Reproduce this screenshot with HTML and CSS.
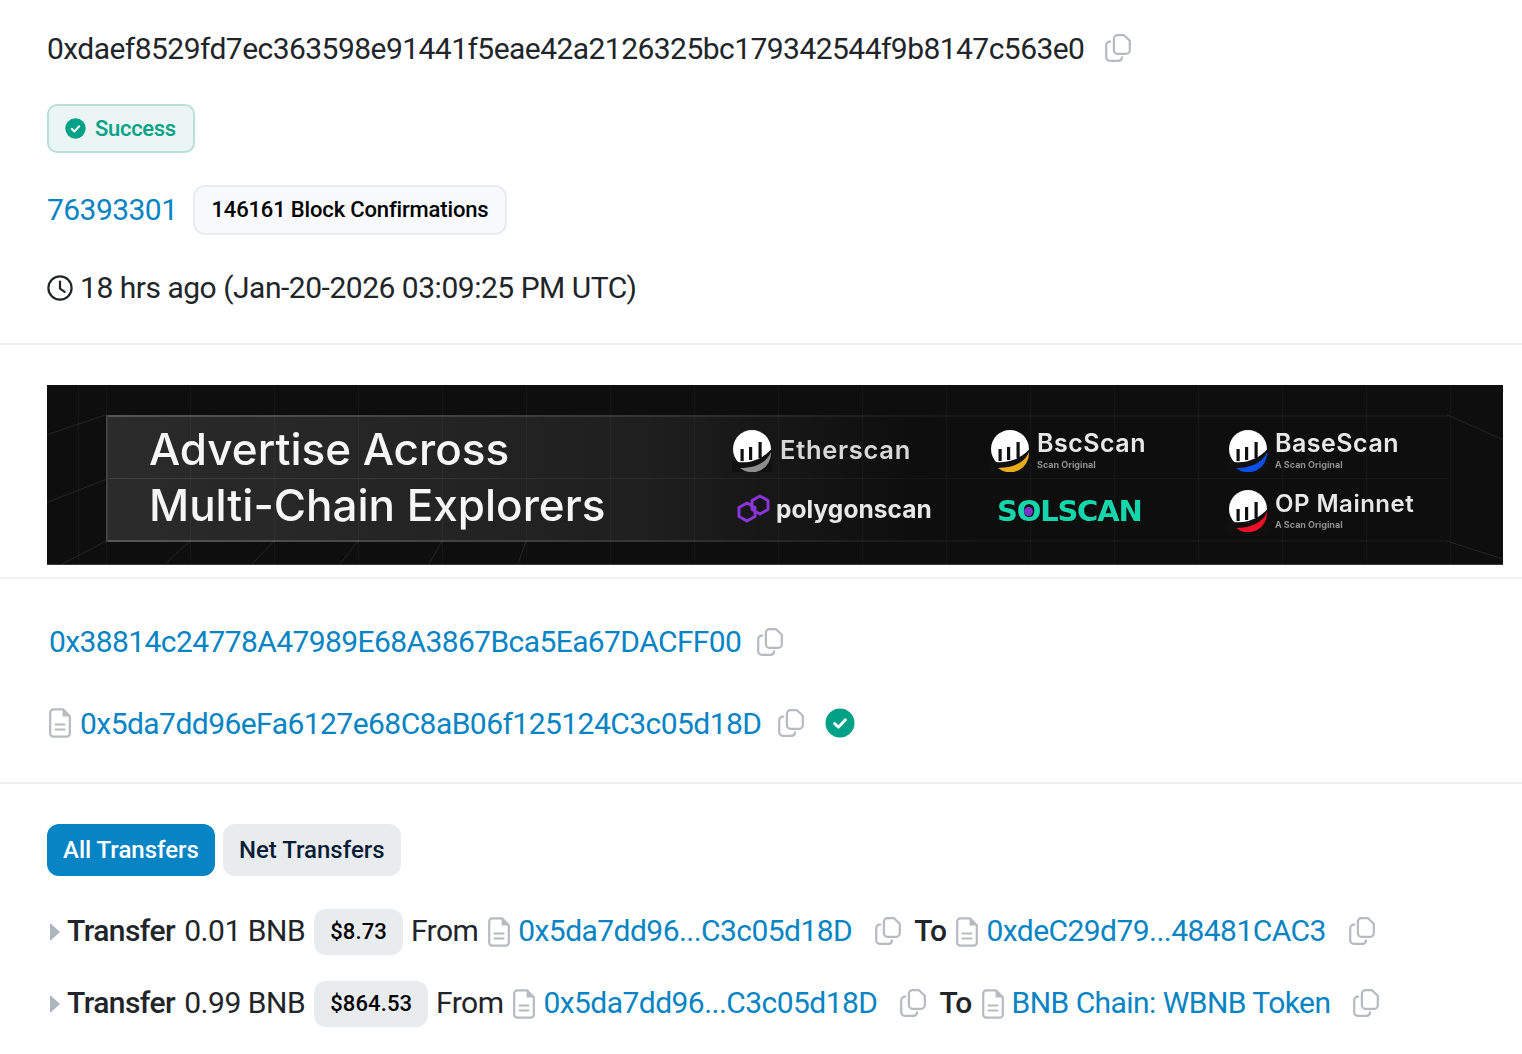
FILE: index.html
```html
<!DOCTYPE html>
<html lang="en">
<head>
<meta charset="utf-8">
<title>Transaction details</title>
<link rel="stylesheet" href="styles.css">
</head>
<body>
<svg class="defs" width="0" height="0">
  <symbol id="copy" viewBox="0 0 26 28">
    <path d="M12.5 1.2h6.5l5.8 5.6v9.4a3.6 3.6 0 0 1-3.6 3.6h-8.7a3.6 3.6 0 0 1-3.6-3.6V4.8a3.6 3.6 0 0 1 3.6-3.6z" fill="none" stroke="currentColor" stroke-width="2.2" stroke-linejoin="round"/>
    <path d="M5.2 7.6h-.4a3.6 3.6 0 0 0-3.6 3.6v12a3.6 3.6 0 0 0 3.6 3.6h8.6a3.6 3.6 0 0 0 3.6-3.4" fill="none" stroke="currentColor" stroke-width="2.2" stroke-linecap="round"/>
  </symbol>
  <symbol id="doc" viewBox="0 0 22 30">
    <path d="M4.4 1.3h9.6l6.8 6.9v17.3a3.2 3.2 0 0 1-3.2 3.2H4.4a3.2 3.2 0 0 1-3.2-3.2V4.5a3.2 3.2 0 0 1 3.2-3.2z" fill="none" stroke="currentColor" stroke-width="2.2" stroke-linejoin="round"/>
    <path d="M13.6 1.8v6.8h6.8z" fill="currentColor"/>
    <path d="M6.5 16.5h9M6.5 21.5h9" stroke="currentColor" stroke-width="2.2" stroke-linecap="round"/>
  </symbol>
  <symbol id="check" viewBox="0 0 30 30">
    <circle cx="15" cy="15" r="14.5" fill="currentColor"/>
    <path d="M9.6 15.4l3.8 3.8 7-7.4" fill="none" stroke="#fff" stroke-width="2.8" stroke-linecap="round" stroke-linejoin="round"/>
  </symbol>
  <symbol id="scan" viewBox="0 0 40 42">
    <circle cx="20" cy="19" r="19" fill="#fff"/>
    <path d="M8.5 19h3.2v12H8.5zM17 17h3.2v13H17zM26.5 12h3.2v16h-3.2z" fill="#101011"/>
    <path d="M0 30.5c13 4.500 29 .5 40-12V42H0z" fill="#101011"/>
  </symbol>
</svg>

<section class="group top">
  <div class="row hash-row">
    <span class="hash">0xdaef8529fd7ec363598e91441f5eae42a2126325bc179342544f9b8147c563e0</span>
    <svg class="ico copy hash-copy"><use href="#copy"/></svg>
  </div>
  <div class="badge">
    <svg class="badge-check"><use href="#check"/></svg>
    <span>Success</span>
  </div>
  <div class="row block-row">
    <a class="link lifted">76393301</a>
    <span class="confirm">146161 Block Confirmations</span>
  </div>
  <div class="row time-row">
    <svg class="clock" viewBox="0 0 26 26"><circle cx="13" cy="13" r="11.6" fill="none" stroke="currentColor" stroke-width="2.2"/><path d="M13 6.5V13.6l4.6 3.2" fill="none" stroke="currentColor" stroke-width="2.2" stroke-linecap="round" stroke-linejoin="round"/></svg>
    <span class="lifted time-text">18 hrs ago (Jan-20-2026 03:09:25 PM UTC)</span>
  </div>
</section>
<hr class="rule">

<div class="banner">
  <svg class="banner-lines" viewBox="0 0 1456 180" preserveAspectRatio="none">
    <path d="M59 157L15 180M0 50L59 30M0 118L59 95M143 157L118 180M227 157L205 180M311 157L293 180M395 157L382 180M479 157L471 180M1400 30L1456 55M1400 157L1456 175" stroke="#fff" stroke-opacity=".1" fill="none"/>
  </svg>
  <div class="panel">
    <div class="ad-title">Advertise Across<br>Multi-Chain Explorers</div>
    <div class="logos">
      <div class="logo">
        <svg class="scan"><use href="#scan"/></svg>
        <svg class="swoosh" viewBox="0 0 40 42"><path d="M39 22A19 19 0 0 1 8 38c13 0 26-4 31-16z" fill="#8d8d8d"/></svg>
        <span class="logo-name eth">Etherscan</span>
      </div>
      <div class="logo">
        <svg class="scan"><use href="#scan"/></svg>
        <svg class="swoosh" viewBox="0 0 40 42"><path d="M39 22A19 19 0 0 1 8 38c13 0 26-4 31-16z" fill="#e9ac18"/></svg>
        <span class="logo-text"><span class="logo-name">BscScan</span><small class="logo-sub">Scan Original</small></span>
      </div>
      <div class="logo">
        <svg class="scan"><use href="#scan"/></svg>
        <svg class="swoosh" viewBox="0 0 40 42"><path d="M39 22A19 19 0 0 1 8 38c13 0 26-4 31-16z" fill="#0b4fe8"/></svg>
        <span class="logo-text"><span class="logo-name">BaseScan</span><small class="logo-sub">A Scan Original</small></span>
      </div>
      <div class="logo poly">
        <svg class="poly-mark" viewBox="0 0 36 32"><path d="M11 10l8 4.500v9L11 28l-8-4.500v-9zM24 3l8 4.500v9L24 21l-8-4.500v-9z" fill="none" stroke="#8a35d8" stroke-width="3" stroke-linejoin="round"/></svg>
        <span class="logo-name poly-name">polygonscan</span>
      </div>
      <div class="logo sol">
        <span class="sol-name">S<span class="sol-o">O</span>LSCAN</span>
      </div>
      <div class="logo">
        <svg class="scan"><use href="#scan"/></svg>
        <svg class="swoosh" viewBox="0 0 40 42"><path d="M39 22A19 19 0 0 1 8 38c13 0 26-4 31-16z" fill="#ee1024"/></svg>
        <span class="logo-text"><span class="logo-name op">OP Mainnet</span><small class="logo-sub">A Scan Original</small></span>
      </div>
    </div>
  </div>
</div>
<hr class="rule rule-after">

<section class="group">
  <div class="row addr-first">
    <a class="link lifted from-addr">0x38814c24778A47989E68A3867Bca5Ea67DACFF00</a>
    <svg class="ico copy addr-copy"><use href="#copy"/></svg>
  </div>
  <div class="row addr-second">
    <svg class="ico doc big-doc"><use href="#doc"/></svg>
    <a class="link">0x5da7dd96eFa6127e68C8aB06f125124C3c05d18D</a>
    <svg class="ico copy addr-copy wide"><use href="#copy"/></svg>
    <svg class="verified"><use href="#check"/></svg>
  </div>
</section>
<hr class="rule rule-third">

<section class="group">
  <div class="tabs">
    <span class="tab active">All Transfers</span>
    <span class="tab">Net Transfers</span>
  </div>
  <div class="row transfer first">
    <i class="caret"></i>
    <b class="strong lifted">Transfer</b><span class="amt lifted">0.01 BNB</span>
    <span class="usd">$8.73</span>
    <span class="word lifted">From</span>
    <svg class="ico doc"><use href="#doc"/></svg>
    <a class="link lifted">0x5da7dd96...C3c05d18D</a>
    <svg class="ico copy tr-copy"><use href="#copy"/></svg>
    <b class="strong to lifted">To</b>
    <svg class="ico doc"><use href="#doc"/></svg>
    <a class="link lifted">0xdeC29d79...48481CAC3</a>
    <svg class="ico copy tr-copy"><use href="#copy"/></svg>
  </div>
  <div class="row transfer second">
    <i class="caret"></i>
    <b class="strong lifted">Transfer</b><span class="amt lifted">0.99 BNB</span>
    <span class="usd">$864.53</span>
    <span class="word lifted">From</span>
    <svg class="ico doc"><use href="#doc"/></svg>
    <a class="link lifted">0x5da7dd96...C3c05d18D</a>
    <svg class="ico copy tr-copy"><use href="#copy"/></svg>
    <b class="strong to lifted">To</b>
    <svg class="ico doc"><use href="#doc"/></svg>
    <a class="link lifted">BNB Chain: WBNB Token</a>
    <svg class="ico copy tr-copy"><use href="#copy"/></svg>
  </div>
</section>
</body>
</html>
```
FILE: styles.css
```css
* { box-sizing: border-box; }
html, body { margin: 0; padding: 0; background: #fff; }
body {
  width: 1522px;
  height: 1054px;
  overflow: hidden;
  font-family: Roboto, "Liberation Sans", sans-serif;
  font-size: 30px;
  letter-spacing: -.55px;
  color: #212529;
  -webkit-font-smoothing: antialiased;
}
.defs { position: absolute; }
.group { padding: 0 19px 0 47px; }
.row { display: flex; align-items: center; white-space: nowrap; }
.link { color: #0784c3; }
.lifted { margin-bottom: 2px; }
.ico { display: block; flex: none; }
.copy { width: 26px; height: 28px; color: #b6bac1; }
.doc { width: 22px; height: 30px; color: #b6bac1; }

.hash-row { height: 96px; }
.hash-copy { margin-left: 21px; }
.badge {
  display: inline-flex;
  align-items: center;
  width: 148px;
  height: 49px;
  margin-top: 8px;
  padding-left: 16px;
  border: 2px solid #b8e0d8;
  border-radius: 10px;
  background: #ebf6f4;
  color: #00a186;
  font-size: 22px;
  font-weight: 500;
  letter-spacing: -.3px;
}
.badge-check { width: 21px; height: 21px; margin-right: 9px; color: #00a186; }
.block-row { margin-top: 32px; height: 50px; }
.confirm {
  display: flex;
  align-items: center;
  height: 50px;
  margin-left: 16px;
  padding: 0 17px 2px 16px;
  border: 2px solid #e9ecef;
  border-radius: 12px;
  background: #f8f9fa;
  color: #000;
  font-size: 22px;
  font-weight: 500;
  letter-spacing: -.16px;
}
.time-row { margin-top: 28px; height: 50px; }
.clock { width: 26px; height: 26px; margin-right: 7px; }
.time-text { letter-spacing: -.48px; }

.rule { height: 2px; margin: 30px 0 0; border: 0; background: #eff0f2; }
.rule-after { margin-top: 12px; }
.rule-third { margin-top: 39px; }

.banner {
  position: relative;
  width: 1456px;
  height: 180px;
  margin: 40px 0 0 47px;
  padding: 30px 55px 23px 59px;
  overflow: hidden;
  background-color: #0e0e0f;
  background-image:
    repeating-linear-gradient(90deg, rgba(255,255,255,.04) 0 1px, transparent 1px 84px);
  background-position: 59px 0;
  border-bottom: 1px solid #3a3a3a;
  letter-spacing: 0;
}
.banner-lines { position: absolute; inset: 0; width: 100%; height: 100%; }
.panel {
  position: relative;
  display: flex;
  height: 127px;
  border-style: solid;
  border-width: 2px 0 2px 2px;
  border-image: linear-gradient(90deg, rgba(255,255,255,.2), rgba(255,255,255,.1) 40%, rgba(255,255,255,.03) 65%) 1;
  background: linear-gradient(90deg, rgba(255,255,255,.12) 0, rgba(255,255,255,.07) 40%, rgba(255,255,255,0) 60%);
}
.panel::after {
  content: "";
  position: absolute;
  left: 0;
  right: 0;
  top: 61px;
  height: 1px;
  background: linear-gradient(90deg, rgba(255,255,255,.1), rgba(255,255,255,.03) 65%);
}
.ad-title {
  width: 624px;
  padding: 4px 0 0 41px;
  color: #f6f6f6;
  font-family: Inter, sans-serif;
  font-size: 44px;
  font-weight: 500;
  line-height: 56px;
  filter: blur(.5px);
  position: relative;
  z-index: 1;
}
.logos {
  display: grid;
  grid-template-columns: 258px 238px 190px;
  grid-template-rows: 60px 60px;
  padding-top: 4px;
  position: relative;
  z-index: 1;
  filter: blur(.6px);
}
.logo { position: relative; display: flex; align-items: center; color: #e8e8e8; }
.scan, .swoosh { width: 40px; height: 42px; }
.swoosh { position: absolute; left: 0; top: 50%; margin-top: -21px; }
.logo-text { display: flex; flex-direction: column; margin-left: 7px; margin-top: -5px; }
.logo-name {
  font-family: Inter, sans-serif;
  font-size: 25px;
  font-weight: 600;
  line-height: 31px;
  letter-spacing: .5px;
}
.logo-name.eth { margin: 0 0 4px 8px; font-size: 25.5px; letter-spacing: .7px; color: #d8d8d8; }
.logo-name.op { font-size: 24px; }
.logo-sub {
  font-family: Inter, sans-serif;
  font-size: 9px;
  font-weight: 700;
  line-height: 11px;
  color: #8f8f8f;
}
.poly { padding: 0 0 4px 4px; }
.poly-mark { width: 36px; height: 32px; margin-right: 4px; }
.poly-name { font-weight: 700; font-size: 24.5px; letter-spacing: .05px; }
.sol { padding-left: 7px; }
.sol-name {
  font-family: "DejaVu Sans", sans-serif;
  font-size: 29px;
  font-weight: 700;
  color: #14d6ac;
  letter-spacing: -1.2px;
}
.sol-o { position: relative; color: #14d6ac; }
.sol-o::after {
  content: "";
  position: absolute;
  left: 50%;
  top: 50%;
  width: 9px;
  height: 9px;
  margin: -4px 0 0 -4px;
  border-radius: 50%;
  background: #7b36c9;
}

.addr-first { margin-top: 43px; height: 40px; padding-left: 2px; }
.from-addr { letter-spacing: -.6px; }
.addr-copy { margin-left: 16px; }
.addr-second { margin-top: 41px; height: 40px; padding-left: 2px; }
.big-doc { margin-right: 9px; }
.addr-copy.wide { margin-left: 17px; }
.verified { width: 30px; height: 30px; margin-left: 21px; color: #00a186; }

.tabs { display: flex; gap: 8px; margin-top: 40px; letter-spacing: 0; }
.tab {
  display: flex;
  align-items: center;
  height: 52px;
  padding: 0 16px;
  border-radius: 12px;
  background: #e9ecef;
  color: #081d35;
  font-size: 24px;
  font-weight: 500;
}
.tab.active { background: #0784c3; color: #fff; }

.transfer { height: 46px; }
.transfer.first { margin-top: 33px; }
.transfer.second { margin-top: 26px; }
.caret {
  width: 0;
  height: 0;
  margin: 0 7px 0 3px;
  border-left: 10px solid #adb5bd;
  border-top: 9px solid transparent;
  border-bottom: 9px solid transparent;
}
.strong { font-weight: 500; }
.amt { margin-left: 9px; letter-spacing: -.45px; }
.usd {
  display: flex;
  align-items: center;
  height: 46px;
  margin: 0 8px 0 9px;
  padding: 0 16px 2px;
  border-radius: 12px;
  background: #e9ecef;
  color: #000;
  font-size: 22px;
  font-weight: 500;
  letter-spacing: .1px;
}
.word + .doc { margin-left: 10px; }
.transfer .doc { margin-right: 8px; }
.transfer .lifted { margin-bottom: 3px; }
.tr-copy { margin: 0 0 3px 23px; }
.to { margin-left: 13px; margin-right: 10px; }
```
